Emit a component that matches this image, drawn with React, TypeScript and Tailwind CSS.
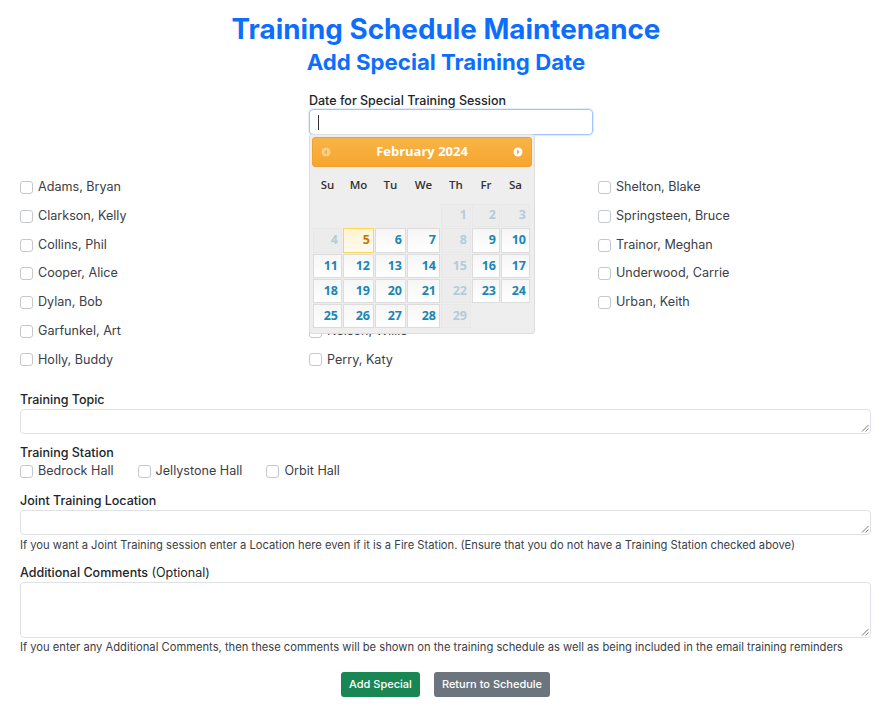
import React from "react";

const Check = ({ label, className = "" }: { label: string; className?: string }) => (
  <label className={"flex items-center gap-[5px] " + className}>
    <span className="w-[13px] h-[13px] rounded-[3px] border border-[#c4c8cc] bg-white shrink-0" />
    <span className="text-[12.6px] text-[#3b4047] whitespace-nowrap">{label}</span>
  </label>
);

const Blank = () => <div className="h-[28.7px]" />;

const col1 = ["Adams, Bryan", "Clarkson, Kelly", "Collins, Phil", "Cooper, Alice", "Dylan, Bob", "Garfunkel, Art", "Holly, Buddy"];
const col3 = ["Shelton, Blake", "Springsteen, Bruce", "Trainor, Meghan", "Underwood, Carrie", "Urban, Keith"];

type C = { d: number; off?: boolean; today?: boolean } | null;
const rows: { h: string; cells: C[] }[] = [
  { h: "h-[23px]", cells: [null, null, null, null, { d: 1, off: true }, { d: 2, off: true }, { d: 3, off: true }] },
  { h: "h-[25px]", cells: [{ d: 4, off: true }, { d: 5, today: true }, { d: 6 }, { d: 7 }, { d: 8, off: true }, { d: 9 }, { d: 10 }] },
  { h: "h-[24px]", cells: [{ d: 11 }, { d: 12 }, { d: 13 }, { d: 14 }, { d: 15, off: true }, { d: 16 }, { d: 17 }] },
  { h: "h-[24px]", cells: [{ d: 18 }, { d: 19 }, { d: 20 }, { d: 21 }, { d: 22, off: true }, { d: 23 }, { d: 24 }] },
  { h: "h-[24px]", cells: [{ d: 25 }, { d: 26 }, { d: 27 }, { d: 28 }, { d: 29, off: true }, null, null] },
];

const Cell = ({ c, h }: { c: C; h: string }) => {
  if (!c) return <div className={h} />;
  const base = "flex items-center justify-end pr-[3px] text-[12.5px] font-bold border " + h + " ";
  if (c.today)
    return <div className={base + "border-[#fbd850] bg-gradient-to-b from-[#fff3d0] to-[#fffaf0] text-[#c77405]"}>{c.d}</div>;
  if (c.off)
    return <div className={base + "border-[#e8e8e8] bg-[#ececec] text-[#b4ccd8]"}>{c.d}</div>;
  return <div className={base + "border-[#dcdcdc] bg-gradient-to-b from-[#f6f6f6] to-white text-[#1c86b0]"}>{c.d}</div>;
};

const Calendar = () => (
  <div className="absolute left-0 top-[24px] w-[226px] h-[200px] bg-[#eeeeee] border border-[#dddddd] rounded-[3px] p-[2px] z-10 font-['Open_Sans','Liberation_Sans',sans-serif]">
    <div className="h-[30px] rounded-[3px] border border-[#f0a030] bg-gradient-to-b from-[#f8b448] to-[#f6a62c] flex items-center justify-between px-[8px]">
      <svg width="10" height="10" viewBox="0 0 10 10" className="opacity-40">
        <circle cx="5" cy="5" r="4.5" fill="#fff" />
        <path d="M6 2.5 3.5 5 6 7.5z" fill="#f6a62c" />
      </svg>
      <span className="text-[13px] font-bold text-white">February 2024</span>
      <svg width="10" height="10" viewBox="0 0 10 10">
        <circle cx="5" cy="5" r="4.5" fill="#fff" />
        <path d="M4 2.5 6.5 5 4 7.5z" fill="#f6a62c" />
      </svg>
    </div>
    <div className="grid grid-cols-[29px_31px_31px_33px_30px_28px_29px] gap-x-px gap-y-px px-[1px] mt-[1px]">
      {["Su", "Mo", "Tu", "We", "Th", "Fr", "Sa"].map((d) => (
        <div key={d} className="h-[35px] pb-[1px] flex items-center justify-center text-[11.5px] font-semibold text-[#333333]">{d}</div>
      ))}
      {rows.map((r, i) =>
        r.cells.map((c, j) => <Cell key={i + "-" + j} c={c} h={r.h} />)
      )}
    </div>
  </div>
);

const Box = ({ h }: { h: string }) => (
  <div className={"w-full border border-[#dee2e6] rounded-[4px] bg-white relative " + h}>
    <svg width="8" height="8" viewBox="0 0 8 8" className="absolute right-[1px] bottom-[1px]">
      <path d="M7.5 1 1 7.5M7.5 4.5 4.5 7.5" stroke="#777" strokeWidth="1" />
    </svg>
  </div>
);

export default function App() {
  return (
    <div className="w-[882px] h-[706px] bg-white overflow-hidden font-['Inter','Liberation_Sans',sans-serif] text-[#212529] px-[20px]">
      <h1 className="text-[27.8px] leading-[32px] font-bold text-[#0d6efd] text-center pt-[13px] box-content ml-[-20px] mr-[-30px]">Training Schedule Maintenance</h1>
      <h2 className="text-[22.2px] leading-[28px] font-bold text-[#0d6efd] text-center pt-[3px] ml-[-20px] mr-[-30px]">Add Special Training Date</h2>

      <div className="ml-[289px] w-[284px] relative mt-[15px]">
        <div className="text-[12.5px] leading-[19px] font-medium text-[#212529] whitespace-nowrap">Date for Special Training Session</div>
        <div className="h-[26px] mt-[-1px] border border-[#9ec5fe] rounded-[4px] shadow-[0_0_0_1px_rgba(13,110,253,0.12)] flex items-center pl-[8px]">
          <span className="w-px h-[15px] bg-[#333]" />
        </div>
        <div className="absolute left-0 top-[19px] w-full">
          <Calendar />
        </div>
      </div>

      <div className="grid grid-cols-[289px_289px_1fr] mt-[38.5px]">
        <div className="flex flex-col">
          {col1.map((n) => (
            <Check key={n} label={n} className="h-[28.7px]" />
          ))}
        </div>
        <div className="flex flex-col">
          <Blank />
          <Blank />
          <Blank />
          <Blank />
          <Blank />
          <Check label="Nelson, Willie" className="h-[28.7px]" />
          <Check label="Perry, Katy" className="h-[28.7px]" />
        </div>
        <div className="flex flex-col">
          {col3.map((n) => (
            <Check key={n} label={n} className="h-[28.7px]" />
          ))}
        </div>
      </div>

      <div className="w-[851px] mt-[15.5px]">
        <div className="text-[12.5px] leading-[19px] font-medium">Training Topic</div>
        <Box h="h-[25px]" />
        <div className="text-[12.5px] leading-[19px] font-medium mt-[9px]">Training Station</div>
        <div className="flex gap-[24px] h-[19px]">
          <Check label="Bedrock Hall" />
          <Check label="Jellystone Hall" />
          <Check label="Orbit Hall" />
        </div>
        <div className="text-[12.5px] leading-[19px] font-medium mt-[10px]">Joint Training Location</div>
        <Box h="h-[25px]" />
        <div className="text-[11.2px] leading-[18px] text-[#3b4047] mt-[1px] whitespace-nowrap">If you want a Joint Training session enter a Location here even if it is a Fire Station. (Ensure that you do not have a Training Station checked above)</div>
        <div className="text-[12.5px] leading-[19px] font-medium mt-[9px]">Additional Comments <span className="font-normal">(Optional)</span></div>
        <Box h="h-[56px]" />
        <div className="text-[11.2px] leading-[18px] text-[#3b4047] whitespace-nowrap">If you enter any Additional Comments, then these comments will be shown on the training schedule as well as being included in the email training reminders</div>
        <div className="flex justify-center gap-[14px] mt-[16px]">
          <button className="h-[25px] w-[79px] rounded-[3px] bg-[#198754] text-white text-[11px] font-medium">Add Special</button>
          <button className="h-[25px] w-[116px] rounded-[3px] bg-[#6c757d] text-white text-[11px] font-medium">Return to Schedule</button>
        </div>
      </div>
    </div>
  );
}
